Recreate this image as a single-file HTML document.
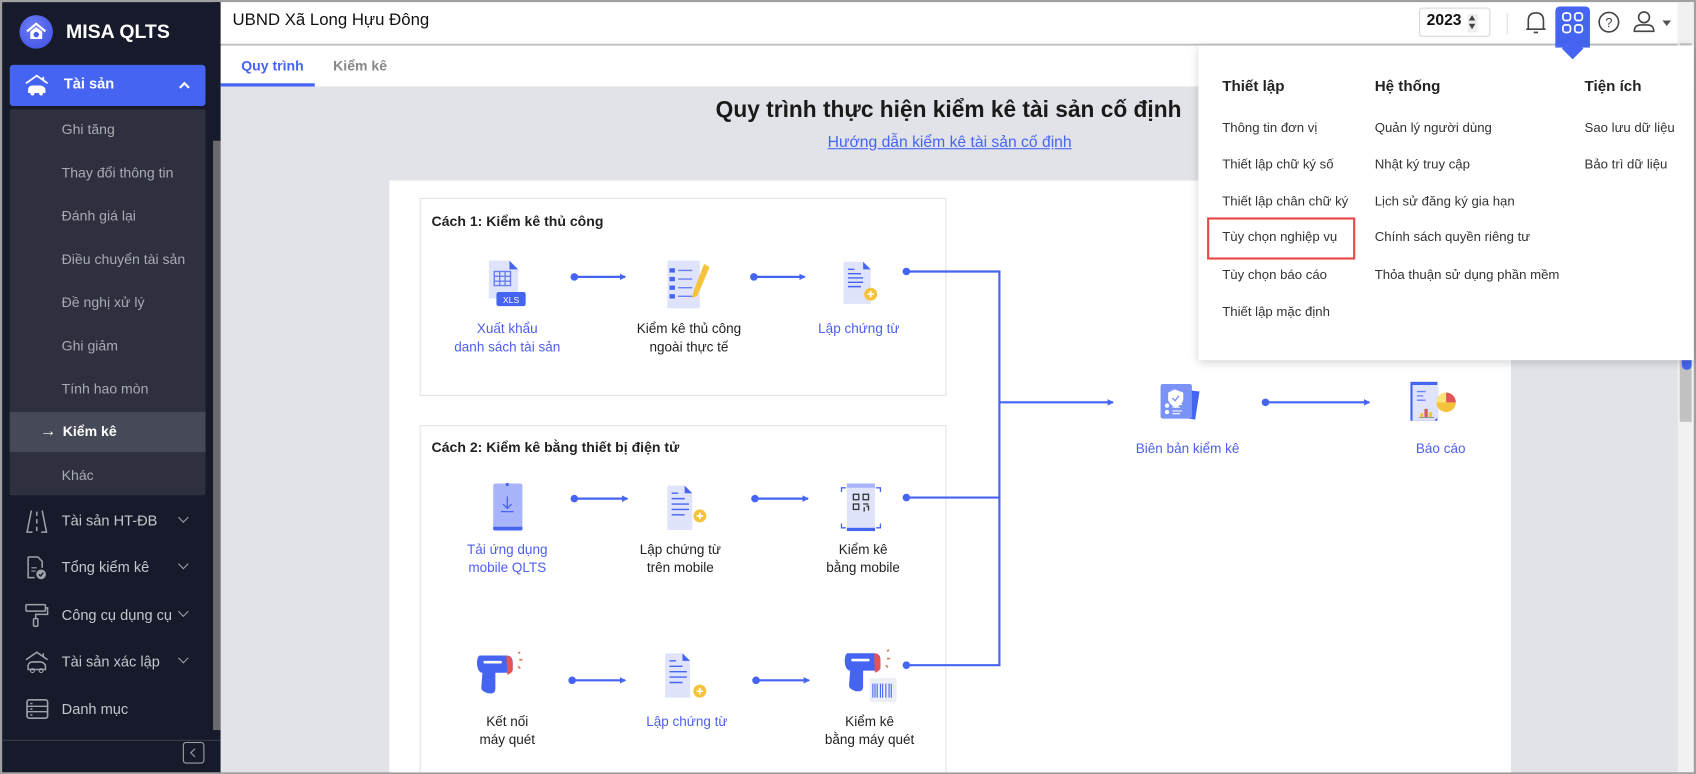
<!DOCTYPE html>
<html><head><meta charset="utf-8">
<style>
*{box-sizing:border-box;margin:0;padding:0}
html,body{width:1696px;height:774px;overflow:hidden;background:#9e9e9e}
body{font-family:"Liberation Sans","DejaVu Sans",sans-serif}
#s{position:absolute;left:0;top:0;width:1568px;height:716px;transform:scale(1.0816);transform-origin:0 0;background:#a0a0a0}
.a{position:absolute}
.sb{left:2px;top:2px;width:202px;height:712px;background:#161a2a}
.si{position:absolute;left:57px;color:#a9abb4;font-size:13px}
.mi{position:absolute;left:57px;color:#c4c6cc;font-size:13.5px}
.chev{position:absolute;left:166px;width:7px;height:7px;border-right:1.8px solid #9ea0a8;border-bottom:1.8px solid #9ea0a8;transform:rotate(45deg)}
.ico{position:absolute;left:22px}
.lbl{position:absolute;font-size:12.5px;text-align:center;line-height:17px;width:160px;color:#222}
.bl{color:#4d5ef0}
.dd{font-size:12.2px;color:#333;position:absolute}
.ddh{font-size:14px;font-weight:bold;color:#222;position:absolute}
</style></head><body><div id="s">
<!-- sidebar -->
<div class="a sb"></div>
<div class="a" style="left:197px;top:130px;width:7px;height:545px;background:#6b6b6b"></div>
<div class="a" style="left:197px;top:2px;width:7px;height:128px;background:#161a2a"></div>
<div class="a" style="left:18px;top:14px;width:31px;height:31px;border-radius:50%;background:radial-gradient(circle at 40% 35%,#6c7cf8,#3b4ee0)"></div>
<svg class="a" style="left:22px;top:18px" width="23" height="23" viewBox="0 0 23 23"><path d="M3 11 L11.5 4 L20 11" fill="none" stroke="#fff" stroke-width="2"/><path d="M6 11 L11.5 7 L17 11 V18 H6Z" fill="#fff"/><circle cx="11.5" cy="14" r="2.5" fill="#4a5ce8"/></svg>
<div class="a" style="left:61px;top:19px;color:#fff;font-weight:bold;font-size:18px">MISA QLTS</div>
<div class="a" style="left:9px;top:60px;width:181px;height:38px;background:#4564f2;border-radius:3px"></div>
<svg class="a" style="left:22px;top:67px" width="24" height="24" viewBox="0 0 24 24"><path d="M2 10 L12 3 L22 10" fill="none" stroke="#fff" stroke-width="1.6"/><path d="M18 4 L18 8" stroke="#fff" stroke-width="1.6"/><path d="M4 19 V15 Q5 12 8 12 H15 Q18 12 20 15 V19Z" fill="#fff"/><circle cx="8" cy="19.5" r="1.8" fill="#fff"/><circle cx="16" cy="19.5" r="1.8" fill="#fff"/></svg>
<div class="a" style="left:59px;top:70px;color:#fff;font-weight:bold;font-size:13.5px">Tài sản</div>
<div class="a" style="left:167px;top:77px;width:7px;height:7px;border-left:2px solid #fff;border-top:2px solid #fff;transform:rotate(45deg)"></div>
<div class="a" style="left:9px;top:101px;width:181px;height:357px;background:#2e303f;border-radius:2px"></div>
<div class="a" style="left:9px;top:381px;width:181px;height:37px;background:#464957"></div>
<div class="si" style="top:112px">Ghi tăng</div>
<div class="si" style="top:152px">Thay đổi thông tin</div>
<div class="si" style="top:192px">Đánh giá lại</div>
<div class="si" style="top:232px">Điều chuyển tài sản</div>
<div class="si" style="top:272px">Đề nghị xử lý</div>
<div class="si" style="top:312px">Ghi giảm</div>
<div class="si" style="top:352px">Tính hao mòn</div>
<div class="si" style="top:390px;color:#fff;left:37px;font-size:15px">→</div>
<div class="si" style="top:391px;color:#fff;font-weight:bold;left:58px">Kiểm kê</div>
<div class="si" style="top:432px">Khác</div>
<svg class="ico" style="top:471px" width="24" height="22" viewBox="0 0 24 22"><path d="M7 1 L3 21 H8 M17 1 L21 21 H16 M12 2V6 M12 9V13 M12 16V20" fill="none" stroke="#a0a2aa" stroke-width="1.4"/></svg>
<div class="mi" style="top:474px">Tài sản HT-ĐB</div><div class="chev" style="top:475px"></div>
<svg class="ico" style="top:514px" width="24" height="22" viewBox="0 0 24 22"><path d="M4 1 H13 L17 5 V11 M10 20 H4 V1" fill="none" stroke="#a0a2aa" stroke-width="1.4"/><path d="M7 11H12M7 14H11" stroke="#a0a2aa"/><circle cx="16" cy="17" r="4.5" fill="#a0a2aa"/><path d="M14 17 L15.5 18.5 L18 15.5" fill="none" stroke="#161a2a" stroke-width="1.3"/></svg>
<div class="mi" style="top:517px">Tổng kiểm kê</div><div class="chev" style="top:518px"></div>
<svg class="ico" style="top:558px" width="24" height="22" viewBox="0 0 24 22"><rect x="2" y="1" width="18" height="6" rx="1" fill="none" stroke="#a0a2aa" stroke-width="1.4"/><path d="M20 4 H22 V10 H11 V14" fill="none" stroke="#a0a2aa" stroke-width="1.4"/><rect x="9" y="14" width="4" height="7" rx="1" fill="none" stroke="#a0a2aa" stroke-width="1.4"/></svg>
<div class="mi" style="top:561px">Công cụ dụng cụ</div><div class="chev" style="top:562px"></div>
<svg class="ico" style="top:601px" width="24" height="22" viewBox="0 0 24 22"><path d="M2 9 L12 2 L22 9 M18 3V6" fill="none" stroke="#a0a2aa" stroke-width="1.4"/><path d="M4 18 V14 Q5 11 8 11 H15 Q18 11 20 14 V18Z" fill="none" stroke="#a0a2aa" stroke-width="1.4"/><circle cx="8" cy="19" r="1.8" fill="none" stroke="#a0a2aa"/><circle cx="16" cy="19" r="1.8" fill="none" stroke="#a0a2aa"/></svg>
<div class="mi" style="top:604px">Tài sản xác lập</div><div class="chev" style="top:605px"></div>
<svg class="ico" style="top:645px" width="24" height="22" viewBox="0 0 24 22"><rect x="3" y="2" width="19" height="17" rx="2" fill="none" stroke="#a0a2aa" stroke-width="1.5"/><path d="M3 8H22M3 13H22M6 5.5H8M6 10.5H8M6 16H8" stroke="#a0a2aa" stroke-width="1.3"/></svg>
<div class="mi" style="top:648px">Danh mục</div>
<div class="a" style="left:2px;top:684px;width:202px;height:1px;background:#3a3d4c"></div>
<div class="a" style="left:169px;top:686px;width:20px;height:20px;border:1px solid #a0a2aa;border-radius:3px"></div>
<div class="a" style="left:177px;top:693px;width:6px;height:6px;border-left:1.3px solid #a0a2aa;border-bottom:1.3px solid #a0a2aa;transform:rotate(45deg)"></div>
<!-- header -->
<div class="a" style="left:204px;top:2px;width:1362px;height:39px;background:#fff;border-bottom:1px solid #e4e4e8"></div>
<div class="a" style="left:215px;top:10px;font-size:15.5px;color:#111">UBND Xã Long Hựu Đông</div>
<div class="a" style="left:1312px;top:7px;width:66px;height:27px;border:1px solid #d6d6da;border-radius:3px;background:#fff"></div>
<div class="a" style="left:1319px;top:11px;font-size:14.5px;font-weight:bold;color:#111">2023</div>
<div class="a" style="left:1357px;top:13px;width:9px;height:17px;background:#eee"></div>
<div class="a" style="left:1358px;top:14px;width:0;height:0;border-left:3.5px solid transparent;border-right:3.5px solid transparent;border-bottom:5px solid #444"></div>
<div class="a" style="left:1358px;top:22px;width:0;height:0;border-left:3.5px solid transparent;border-right:3.5px solid transparent;border-top:5px solid #444"></div>
<div class="a" style="left:1393px;top:12px;width:1px;height:20px;background:#ddd"></div>
<svg class="a" style="left:1409px;top:9px" width="22" height="24" viewBox="0 0 22 24"><path d="M4 18 V10 Q4 3 11 3 Q18 3 18 10 V18 H20 H2Z M9 21 H13" fill="none" stroke="#444" stroke-width="1.5"/></svg>
<div class="a" style="left:1438px;top:6px;width:32px;height:35px;background:#4564f2;border-radius:4px 4px 0 0"></div>
<div class="a" style="left:1444px;top:33px;width:20px;height:20px;background:#4564f2;transform:rotate(45deg)"></div>
<svg class="a" style="left:1444px;top:11px" width="20" height="20" viewBox="0 0 20 20"><g fill="none" stroke="#fff" stroke-width="1.6"><rect x="1" y="1" width="7" height="7" rx="2.5"/><rect x="12" y="1" width="7" height="7" rx="2.5"/><rect x="1" y="12" width="7" height="7" rx="2.5"/><rect x="12" y="12" width="7" height="7" rx="2.5"/></g></svg>
<svg class="a" style="left:1477px;top:10px" width="21" height="21" viewBox="0 0 21 21"><circle cx="10.5" cy="10.5" r="9" fill="none" stroke="#444" stroke-width="1.5"/><text x="10.5" y="15" font-size="12" text-anchor="middle" fill="#444" font-family="Liberation Sans">?</text></svg>
<svg class="a" style="left:1509px;top:9px" width="22" height="22" viewBox="0 0 22 22"><circle cx="11" cy="7" r="5" fill="none" stroke="#444" stroke-width="1.5"/><path d="M2 20 Q2 14 8 14 H14 Q20 14 20 20Z" fill="none" stroke="#444" stroke-width="1.5"/></svg>
<div class="a" style="left:1537px;top:19px;border-left:4px solid transparent;border-right:4px solid transparent;border-top:5px solid #555"></div>
<!-- tabs -->
<div class="a" style="left:204px;top:42px;width:1362px;height:38px;background:#fff"></div>
<div class="a" style="left:223px;top:53px;font-size:13px;font-weight:bold;color:#4564f2">Quy trình</div>
<div class="a" style="left:204px;top:77px;width:87px;height:3px;background:#4564f2"></div>
<div class="a" style="left:308px;top:53px;font-size:13px;font-weight:bold;color:#888">Kiểm kê</div>
<!-- content -->
<div class="a" style="left:204px;top:80px;width:1347px;height:634px;background:#e2e3e8"></div>
<div class="a" style="left:1551px;top:2px;width:15px;height:712px;background:#f1f1f1"></div>
<div class="a" style="left:1553px;top:40px;width:11px;height:350px;background:#c1c1c1"></div>
<div class="a" style="left:1555px;top:332px;width:9px;height:10px;background:#4564f2;border-radius:0 0 5px 5px"></div>
<div class="a" style="left:577px;top:90px;width:600px;text-align:center;font-size:21px;font-weight:bold;color:#1a1a1a">Quy trình thực hiện kiểm kê tài sản cố định</div>
<div class="a" style="left:578px;top:124px;width:600px;text-align:center;font-size:14.5px;color:#4564f2;text-decoration:underline">Hướng dẫn kiểm kê tài sản cố định</div>
<div class="a" style="left:360px;top:167px;width:1037px;height:547px;background:#fff"></div>
<div class="a" style="left:388px;top:183px;width:487px;height:183px;border:1px solid #e3e3e3"></div>
<div class="a" style="left:388px;top:393px;width:487px;height:321px;border:1px solid #e3e3e3;border-bottom:none"></div>
<div class="a" style="left:399px;top:197px;font-size:13px;font-weight:bold;color:#222">Cách 1: Kiểm kê thủ công</div>
<div class="a" style="left:399px;top:406px;font-size:13px;font-weight:bold;color:#222">Cách 2: Kiểm kê bằng thiết bị điện tử</div>
<svg class="a" style="left:0;top:0" width="1568" height="716">
<defs><marker id="ar" markerWidth="6" markerHeight="6" refX="5" refY="3" orient="auto" markerUnits="userSpaceOnUse"><path d="M0 0 L6 3 L0 6Z" fill="#4564f2"/></marker></defs>
<g stroke="#4564f2" stroke-width="2" fill="#4564f2">
<circle cx="531" cy="256" r="2.5"/><line x1="531" y1="256" x2="578" y2="256" marker-end="url(#ar)"/>
<circle cx="697" cy="256" r="2.5"/><line x1="697" y1="256" x2="744" y2="256" marker-end="url(#ar)"/>
<circle cx="531" cy="461" r="2.5"/><line x1="531" y1="461" x2="580" y2="461" marker-end="url(#ar)"/>
<circle cx="698" cy="461" r="2.5"/><line x1="698" y1="461" x2="747" y2="461" marker-end="url(#ar)"/>
<circle cx="529" cy="629" r="2.5"/><line x1="529" y1="629" x2="578" y2="629" marker-end="url(#ar)"/>
<circle cx="699" cy="629" r="2.5"/><line x1="699" y1="629" x2="748" y2="629" marker-end="url(#ar)"/>
<circle cx="838" cy="251" r="2.5"/><circle cx="838" cy="460" r="2.5"/><circle cx="838" cy="615" r="2.5"/>
<path d="M838 251 H924 V615 H838 M838 460 H924" fill="none"/>
<line x1="924" y1="372" x2="1029" y2="372" marker-end="url(#ar)"/>
<circle cx="1170" cy="372" r="2.5"/><line x1="1170" y1="372" x2="1266" y2="372" marker-end="url(#ar)"/>
</g>
<!-- icons row1 -->
<path d="M452 241 H471 L479 249 V276 H452Z" fill="#dfe3fb"/><path d="M471 241 L479 249 H471Z" fill="#4564f2"/>
<g stroke="#6a7ff0" stroke-width="1.3" fill="none"><rect x="457" y="251" width="15" height="13"/><path d="M457 255.5H472M457 260H472M462 251V264M467 251V264"/></g>
<rect x="459" y="270" width="27" height="13" rx="2" fill="#4564f2"/><text x="472.5" y="280" font-size="8" fill="#fff" text-anchor="middle" font-family="Liberation Sans">XLS</text>
<rect x="617" y="241" width="30" height="44" fill="#dfe3fb"/>
<g fill="#4564f2"><rect x="619" y="248" width="5" height="4"/><rect x="619" y="256" width="5" height="4"/><rect x="619" y="264" width="5" height="4"/><rect x="619" y="272" width="5" height="4"/></g>
<g stroke="#6a7ff0" stroke-width="1.3"><path d="M627 250H640M627 258H640M627 266H640M627 274H640"/></g>
<path d="M651 244 L656 247 L645 273 L640 276 L641 270Z" fill="#f5c33b"/>
<path d="M780 242 H798 L805 249 V281 H780Z" fill="#dfe3fb"/><path d="M798 242 L805 249 H798Z" fill="#4564f2"/>
<g stroke="#4564f2" stroke-width="1.3"><path d="M784 249H790M784 253H796M784 257H798M784 261H798M784 265H796"/></g>
<circle cx="805" cy="272" r="6" fill="#f5c33b"/><path d="M805 269V275M802 272H808" stroke="#fff" stroke-width="1.5"/>
<!-- row2 -->
<rect x="456" y="447" width="27" height="44" rx="2" fill="#a9b5fb"/><rect x="456" y="487" width="27" height="3" fill="#4564f2"/><circle cx="469" cy="448" r="1.5" fill="#4564f2"/>
<path d="M469 459V470M465 466L469 470L473 466M463 473H475" fill="none" stroke="#4564f2" stroke-width="1.2"/>
<path d="M617 449 H633 L640 456 V490 H617Z" fill="#dfe3fb"/><path d="M633 449 L640 456 H633Z" fill="#4564f2"/>
<g stroke="#4564f2" stroke-width="1.3"><path d="M621 456H627M621 461H633M621 466H637M621 471H637M621 476H633"/></g>
<circle cx="647" cy="477" r="6" fill="#f5c33b"/><path d="M647 474V480M644 477H650" stroke="#fff" stroke-width="1.5"/>
<rect x="783" y="447" width="26" height="44" rx="2" fill="#dfe3fb"/><rect x="783" y="488" width="26" height="3" fill="#4564f2"/><rect x="783" y="447" width="26" height="4" fill="#a9b5fb"/>
<path d="M778 455V451H782M814 455V451H810M778 484V488H782M814 484V488H810" fill="none" stroke="#4564f2" stroke-width="1.2"/>
<g fill="none" stroke="#333" stroke-width="1.2"><rect x="789" y="457" width="5" height="5"/><rect x="798" y="457" width="5" height="5"/><rect x="789" y="466" width="5" height="5"/><path d="M798 466H803M799 469V473M801 468H803V472"/></g>
<!-- row3 scanners -->
<g transform="translate(-47,-51)">
<path d="M491 657 H515 Q521 657 521 663 V670 Q521 673 518 673 H505 L505 688 Q505 693 498 692 Q492 690 492 687 L493 673 Q489 673 488 665 Q488 657 491 657Z" fill="#4564f2"/>
<path d="M515 657 Q520 657 521 663 V670 Q521 673 516 675Z" fill="#e1545a"/>
<rect x="494" y="662" width="17" height="2.5" rx="1" fill="#fff"/>
<path d="M526 655L528 654M527 661H530M526 667L528 669" stroke="#e07a5a" stroke-width="1.6"/>
</g>
<g transform="translate(0,-49)">
<path d="M615 653 H631 L638 660 V694 H615Z" fill="#dfe3fb"/><path d="M631 653 L638 660 H631Z" fill="#4564f2"/>
<g stroke="#4564f2" stroke-width="1.3"><path d="M619 660H625M619 665H631M619 670H635M619 675H635M619 680H631"/></g>
<circle cx="647" cy="688" r="6" fill="#f5c33b"/><path d="M647 685V691M644 688H650" stroke="#fff" stroke-width="1.5"/>
</g>
<g transform="translate(-2,-50)">
<path d="M786 654 H810 Q816 654 816 660 V667 Q816 670 813 670 H800 L800 685 Q800 690 793 689 Q787 687 787 684 L788 670 Q784 670 783 662 Q783 654 786 654Z" fill="#4564f2"/>
<path d="M810 654 Q815 654 816 660 V667 Q816 670 811 672Z" fill="#e1545a"/>
<rect x="789" y="659" width="17" height="2.5" rx="1" fill="#fff"/>
<path d="M822 652L824 651M822 659H825M821 665L823 667" stroke="#e07a5a" stroke-width="1.6"/>
<rect x="806" y="677" width="25" height="22" rx="2" fill="#eceef6"/>
<path d="M809 682V695M811 682V695M813 682V695M816 682V695M818 682V695M821 682V695M824 682V695M826 682V695" stroke="#4564f2" stroke-width="1"/>
</g>
<!-- biên bản -->
<g transform="translate(-87,0)">
<path d="M1160 383 L1165 358 L1196 362 L1192 388Z" fill="#4564f2"/>
<rect x="1160" y="355" width="29" height="32" rx="2" fill="#7b93f7"/>
<path d="M1173 360 L1181 363 V369 Q1181 373 1174 377 Q1167 373 1167 369 V363Z" fill="#fff"/>
<path d="M1171 368L1173.5 370.5L1177 366" fill="none" stroke="#7b93f7" stroke-width="1.3"/>
<circle cx="1166" cy="375" r="2" fill="#fff"/><circle cx="1166" cy="381" r="2" fill="#fff"/>
<path d="M1171 374H1180M1171 376.5H1178M1171 380H1180M1171 382.5H1178" stroke="#fff"/>
</g>
<!-- báo cáo -->
<rect x="1304" y="353" width="25" height="36" fill="#4564f2"/>
<path d="M1306 356 H1330 V385 L1326 389 H1306Z" fill="#dfe3fb"/>
<path d="M1310 362H1318M1310 366H1316M1310 370H1318" stroke="#6a7ff0" stroke-width="1.2"/>
<circle cx="1337" cy="372" r="9" fill="#f5c33b"/><path d="M1337 372V363A9 9 0 0 1 1346 372Z" fill="#e1545a"/><path d="M1337 372 L1328 372 A9 9 0 0 1 1337 363Z" fill="#fbe57a"/>
<rect x="1317" y="378" width="3" height="8" fill="#e1545a"/><rect x="1313" y="382" width="3" height="4" fill="#f5c33b"/><rect x="1321" y="381" width="3" height="5" fill="#f5c33b"/><path d="M1312 386H1326" stroke="#999"/>
</svg>
<div class="lbl bl" style="left:389px;top:296px">Xuất khẩu<br>danh sách tài sản</div>
<div class="lbl" style="left:557px;top:296px">Kiểm kê thủ công<br>ngoài thực tế</div>
<div class="lbl bl" style="left:714px;top:296px">Lập chứng từ</div>
<div class="lbl bl" style="left:389px;top:500px">Tải ứng dụng<br>mobile QLTS</div>
<div class="lbl" style="left:549px;top:500px">Lập chứng từ<br>trên mobile</div>
<div class="lbl" style="left:718px;top:500px">Kiểm kê<br>bằng mobile</div>
<div class="lbl" style="left:389px;top:659px">Kết nối<br>máy quét</div>
<div class="lbl bl" style="left:555px;top:659px">Lập chứng từ</div>
<div class="lbl" style="left:724px;top:659px">Kiểm kê<br>bằng máy quét</div>
<div class="lbl bl" style="left:1018px;top:407px">Biên bản kiểm kê</div>
<div class="lbl bl" style="left:1252px;top:407px">Báo cáo</div>
<!-- dropdown -->
<div class="a" style="left:1108px;top:42px;width:458px;height:291px;background:#fff;box-shadow:0 2px 8px rgba(0,0,0,.18)"></div>
<div class="a" style="left:1438px;top:40px;width:32px;height:4px;background:#4564f2"></div>
<div class="a" style="left:1447px;top:38px;width:14px;height:14px;background:#4564f2;transform:rotate(45deg)"></div>
<div class="ddh" style="left:1130px;top:71px">Thiết lập</div>
<div class="ddh" style="left:1271px;top:71px">Hệ thống</div>
<div class="ddh" style="left:1465px;top:71px">Tiện ích</div>
<div class="dd" style="left:1130px;top:111px">Thông tin đơn vị</div>
<div class="dd" style="left:1130px;top:145px">Thiết lập chữ ký số</div>
<div class="dd" style="left:1130px;top:179px">Thiết lập chân chữ ký</div>
<div class="dd" style="left:1130px;top:212px">Tùy chọn nghiệp vụ</div>
<div class="dd" style="left:1130px;top:247px">Tùy chọn báo cáo</div>
<div class="dd" style="left:1130px;top:281px">Thiết lập mặc định</div>
<div class="a" style="left:1116px;top:201px;width:137px;height:39px;border:2px solid #e84a4a"></div>
<div class="dd" style="left:1271px;top:111px">Quản lý người dùng</div>
<div class="dd" style="left:1271px;top:145px">Nhật ký truy cập</div>
<div class="dd" style="left:1271px;top:179px">Lịch sử đăng ký gia hạn</div>
<div class="dd" style="left:1271px;top:212px">Chính sách quyền riêng tư</div>
<div class="dd" style="left:1271px;top:247px">Thỏa thuận sử dụng phần mềm</div>
<div class="dd" style="left:1465px;top:111px">Sao lưu dữ liệu</div>
<div class="dd" style="left:1465px;top:145px">Bảo trì dữ liệu</div>
</div></body></html>
